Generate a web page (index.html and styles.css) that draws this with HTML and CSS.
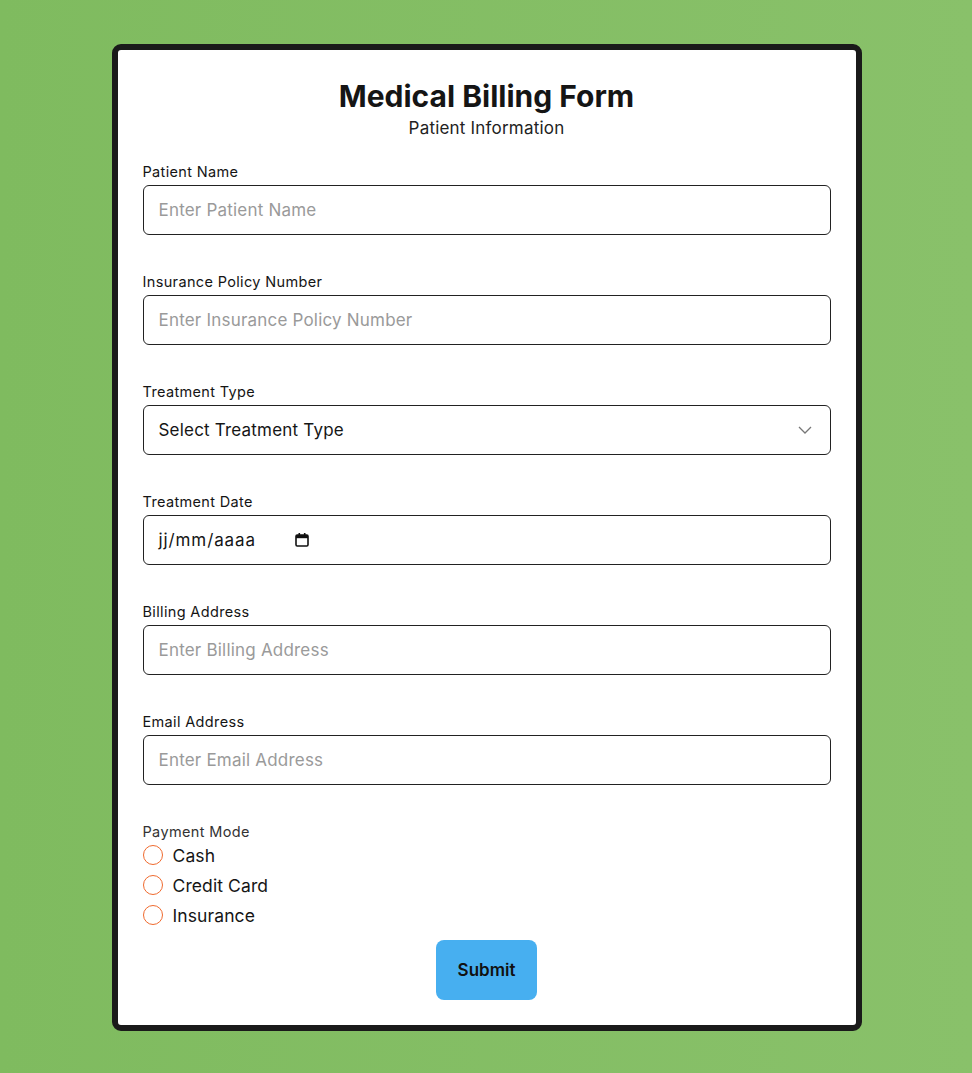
FILE: index.html
```html
<!DOCTYPE html>
<html lang="en">
<head>
    <meta charset="UTF-8">
    <title>Medical Billing Form</title>
    <link rel="stylesheet" href="styles.css">
</head>
<body>
    <div class="card">
        <h1>Medical Billing Form</h1>
        <p class="subtitle">Patient Information</p>
        <form>
            <div class="field">
                <label for="name">Patient Name</label>
                <input class="input" type="text" id="name" placeholder="Enter Patient Name">
            </div>
            <div class="field">
                <label for="policy">Insurance Policy Number</label>
                <input class="input" type="text" id="policy" placeholder="Enter Insurance Policy Number">
            </div>
            <div class="field">
                <label for="treatment">Treatment Type</label>
                <div class="select-wrap">
                    <select class="input select" id="treatment">
                        <option>Select Treatment Type</option>
                        <option>Consultation</option>
                        <option>Surgery</option>
                        <option>Therapy</option>
                    </select>
                    <svg class="chevron" width="14" height="8" viewBox="0 0 14 8"><path d="M1 1l6 6 6-6" fill="none" stroke="#777" stroke-width="1.3"/></svg>
                </div>
            </div>
            <div class="field">
                <label>Treatment Date</label>
                <div class="input date-input">
                    <span>jj/mm/aaaa</span>
                    <svg width="16" height="16" viewBox="0 0 16 16"><rect x="2" y="3" width="12" height="11" rx="1.2" fill="none" stroke="#111" stroke-width="1.6"/><rect x="2" y="3" width="12" height="3.2" fill="#111"/><rect x="4.5" y="1" width="1.6" height="3" fill="#111"/><rect x="9.9" y="1" width="1.6" height="3" fill="#111"/></svg>
                </div>
            </div>
            <div class="field">
                <label for="address">Billing Address</label>
                <input class="input" type="text" id="address" placeholder="Enter Billing Address">
            </div>
            <div class="field">
                <label for="email">Email Address</label>
                <input class="input" type="email" id="email" placeholder="Enter Email Address">
            </div>
            <div class="payment">
                <span class="payment-label">Payment Mode</span>
                <label class="radio"><input type="radio" name="mode"><span>Cash</span></label>
                <label class="radio"><input type="radio" name="mode"><span>Credit Card</span></label>
                <label class="radio"><input type="radio" name="mode"><span>Insurance</span></label>
            </div>
            <div class="btn-container">
                <button class="btn" type="button">Submit</button>
            </div>
        </form>
    </div>
</body>
</html>
```

FILE: styles.css
```css
body {
    font-family: Inter, "Noto Sans", sans-serif;
    margin: 0;
    padding: 44px 0 42px 1px;
    background: linear-gradient(90deg, #7fbb5f, #89c16a);
    color: #151515;
}
.card {
    width: 688px;
    margin: 0 auto;
    background-color: #fff;
    border: 6px solid #1a1a1a;
    border-radius: 9px;
    padding: 25px;
}
h1 {
    text-align: center;
    font-size: 30px;
    line-height: 36px;
    font-weight: 700;
    margin: 3px 0 0;
}
.subtitle {
    text-align: center;
    font-size: 17px;
    line-height: 20px;
    letter-spacing: 0.2px;
    margin: 4px 0 25px;
    color: #222;
}
.field {
    margin-bottom: 38px;
}
.field label {
    display: block;
    font-size: 14.5px;
    line-height: 17px;
    letter-spacing: 0.35px;
    margin-bottom: 5px;
    color: #151515;
}
.input {
    display: block;
    box-sizing: border-box;
    width: 100%;
    height: 50px;
    border: 1px solid #222;
    border-radius: 6px;
    padding: 0 15px;
    font-family: inherit;
    font-size: 17px;
    letter-spacing: 0.2px;
    color: #151515;
    background: #fff;
    outline: none;
}
.input::placeholder {
    color: #9a9a9a;
}
.select-wrap {
    position: relative;
}
.select {
    appearance: none;
    -webkit-appearance: none;
}
.chevron {
    position: absolute;
    right: 19px;
    top: 21px;
    pointer-events: none;
}
.date-input {
    display: flex;
    align-items: center;
    gap: 38px;
    letter-spacing: 0.9px;
}
.payment {
    display: flex;
    flex-direction: column;
}
.payment-label {
    font-size: 14.5px;
    line-height: 17px;
    letter-spacing: 0.35px;
    color: #333;
}
.radio {
    display: flex;
    align-items: center;
    height: 30px;
    font-size: 17.5px;
    letter-spacing: 0.1px;
}
.radio input {
    appearance: none;
    -webkit-appearance: none;
    width: 20px;
    height: 20px;
    margin: 0 10px 0 0;
    border: 1.5px solid #ef6a2e;
    border-radius: 50%;
    box-sizing: border-box;
}
.radio input:checked {
    background: radial-gradient(circle, #ef6a2e 45%, #fff 50%);
}
.btn-container {
    text-align: center;
    margin-top: 10px;
}
.btn {
    background-color: #47aff0;
    border: none;
    border-radius: 8px;
    color: #111;
    font-family: inherit;
    font-size: 17px;
    font-weight: 600;
    width: 101px;
    height: 60px;
    cursor: pointer;
}
```
